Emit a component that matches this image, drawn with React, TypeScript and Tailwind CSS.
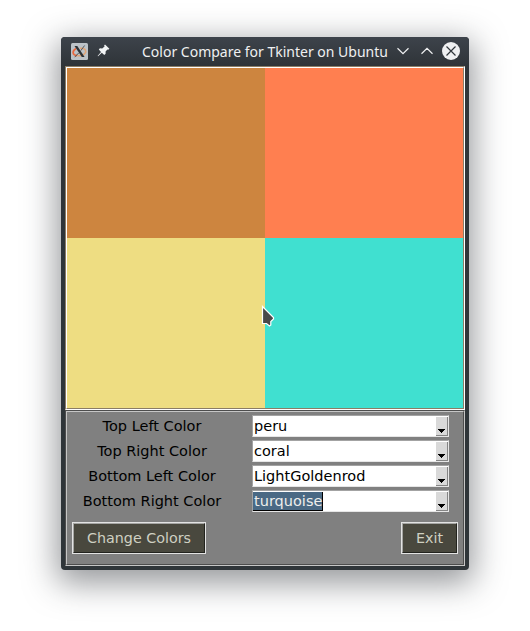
const fields = [
  { label: 'Top Left Color', value: 'peru' },
  { label: 'Top Right Color', value: 'coral' },
  { label: 'Bottom Left Color', value: 'LightGoldenrod' },
  { label: 'Bottom Right Color', value: 'turquoise', selected: true },
];

function XIcon() {
  return (
    <svg width="17" height="17" viewBox="0 0 17 17" className="ml-[9.5px] shrink-0">
      <rect width="17" height="17" rx="1.5" fill="#bcc2c7" />
      <path d="M5 5.5C1 8 1 12 6 12.6" fill="none" stroke="#e8663c" strokeWidth="1.7" />
      <path d="M6 12.6C12 13.5 15.5 10 14.6 7.5C14 5.5 11.5 5 9 5.2" fill="none" stroke="#dfa477" strokeWidth="1.5" />
      <path d="M3.5 3H6.3L13.6 14H10.8Z" fill="#2c3135" />
      <path d="M13.6 2.5L9.8 7.6M7.8 9.8L3.7 14.2" fill="none" stroke="#50565b" strokeWidth="1" />
    </svg>
  );
}

function PinIcon() {
  return (
    <svg width="13" height="13" viewBox="0 0 13 13" className="-mt-[2px] ml-[9px] shrink-0" fill="#f2f4f5">
      <path d="M8 .4L12.4 4.7L11.2 5.7L10.4 5.4L8.6 7.5L8.6 9.8L7.3 11L4.8 8.7L1.1 12.3L.6 11.9L4 7.9L1.8 5.6L2.9 4.3L5.2 4.5L7.6 2.5L7.1 1.4Z" />
    </svg>
  );
}

function TitleBar() {
  return (
    <div className="flex h-[29px] items-center rounded-t-[4px] bg-gradient-to-b from-[#3d434b] to-[#2f3438]">
      <XIcon />
      <PinIcon />
      <span className="ml-[32.5px] w-[247px] whitespace-nowrap font-['Noto_Sans',sans-serif] text-[14px] leading-[28px] text-[#eff0f1]">
        Color Compare for Tkinter on Ubuntu
      </span>
      <svg width="70" height="20" viewBox="0 0 70 20" className="-mt-[2px] ml-[4px] shrink-0" fill="none" stroke="#eff0f1" strokeWidth="1.2">
        <path d="M4.5 7.3L10 12.7L15.5 7.3M28.5 12.7L34 7.3L39.5 12.7" />
        <circle cx="58" cy="10" r="9" fill="#eff0f1" stroke="none" />
        <path d="M53.5 5.5L62.5 14.5M62.5 5.5L53.5 14.5" stroke="#30363b" />
      </svg>
    </div>
  );
}

function ColorCanvas() {
  return (
    <div className="h-[344px] border border-b-white border-l-[#8b7d66] border-r-white border-t-[#8b7d66]">
      <div className="grid h-full grid-cols-[198px_198px] grid-rows-[170px_170px] border border-b-[#8b7d66] border-l-white border-r-[#8b7d66] border-t-white">
        <div className="bg-[#cd853f]" />
        <div className="bg-[#ff7f50]" />
        <div className="bg-[#eedd82]" />
        <div className="bg-[#40e0d0]" />
      </div>
    </div>
  );
}

function ColorBox({ value, selected }: { value: string; selected?: boolean }) {
  return (
    <div className="flex h-[22px] w-[197px] justify-between border border-b-[#e6e6e6] border-l-[#a3a3a3] border-r-[#e6e6e6] border-t-[#a3a3a3] bg-white">
      <div className="flex h-full items-center">
        <span className={selected ? 'h-[19px] border-b border-r border-black bg-[#4a6984] pl-px text-[14.5px] leading-[19px] text-[#eeeeec]' : 'h-[19px] pl-px text-[14.5px] leading-[19px] text-black'}>
          {value}
        </span>
      </div>
      <div className="mt-px flex h-[19px] w-3 justify-center border-b border-r border-[#858585] bg-[#d9d9d9] pt-[12px]">
        <svg width="7" height="5" viewBox="0 0 7 5" shapeRendering="crispEdges"><path d="M0 0H7V1H6V2H5V3H4V4H3V3H2V2H1V1H0Z" /></svg>
      </div>
    </div>
  );
}

function TkButton({ children }: { children: string }) {
  return (
    <button className="h-8 border border-[#e3e3e3]">
      <span className="flex h-full items-center border border-b-[#22231e] border-l-[#a5a5a3] border-r-[#22231e] border-t-[#a5a5a3] bg-[#49483e] px-[13px] pt-px text-[14.3px] text-[#cfd0c2]">
        {children}
      </span>
    </button>
  );
}

export default function App() {
  return (
    <main className="h-[631px] w-[530px] overflow-hidden bg-white pl-[61px] pt-[37px] font-['DejaVu_Sans',sans-serif]">
      <section className="relative h-[533px] w-[408px] rounded-[4px] bg-[#2f3539] shadow-[0_9px_32px_4px_rgba(45,50,56,0.5)]">
        <TitleBar />
        <div className="mx-1">
          <ColorCanvas />
          <div className="h-[156px] border border-b-[#c6c6c6] border-l-[#4d4d4d] border-r-[#c6c6c6] border-t-[#4d4d4d]">
            <div className="h-full border border-b-[#4d4d4d] border-l-[#c6c6c6] border-r-[#4d4d4d] border-t-[#c6c6c6] bg-[#808080] px-[5px] pt-[3px]">
              <div className="flex flex-col gap-[3px]">
                {fields.map((f) => (
                  <div key={f.label} className="flex h-[22px]">
                    <span className="w-[180px] pr-[20px] text-center text-[14.5px] leading-[23px] text-black">{f.label}</span>
                    <ColorBox value={f.value} selected={f.selected} />
                  </div>
                ))}
              </div>
              <div className="mt-[10px] flex justify-between">
                <TkButton>Change Colors</TkButton>
                <TkButton>Exit</TkButton>
              </div>
            </div>
          </div>
        </div>
        <svg className="absolute left-[200px] top-[268px]" width="14" height="23" viewBox="0 0 14 23">
          <path d="M1.5 1.5V18.5H5.5L8.5 21L9.8 20V16.5L12.5 14V12.5Z" fill="#494949" stroke="#fff" strokeWidth="1.2" />
        </svg>
      </section>
    </main>
  );
}
